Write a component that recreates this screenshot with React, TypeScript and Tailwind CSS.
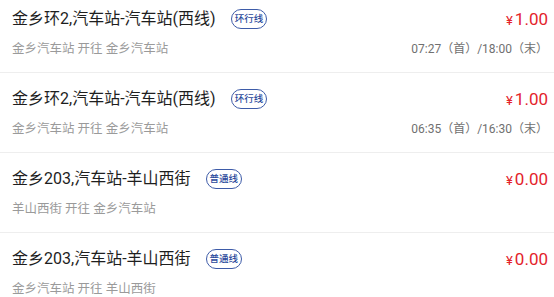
const routes = [
  {
    title: "金乡环2,汽车站-汽车站(西线)",
    tag: "环行线",
    from: "金乡汽车站",
    to: "金乡汽车站",
    price: "1.00",
    time: "07:27（首）/18:00（末）",
  },
  {
    title: "金乡环2,汽车站-汽车站(西线)",
    tag: "环行线",
    from: "金乡汽车站",
    to: "金乡汽车站",
    price: "1.00",
    time: "06:35（首）/16:30（末）",
  },
  {
    title: "金乡203,汽车站-羊山西街",
    tag: "普通线",
    from: "羊山西街",
    to: "金乡汽车站",
    price: "0.00",
    time: "",
  },
  {
    title: "金乡203,汽车站-羊山西街",
    tag: "普通线",
    from: "金乡汽车站",
    to: "羊山西街",
    price: "0.00",
    time: "",
  },
];

function RouteRow({ title, tag, from, to, price, time }: (typeof routes)[number]) {
  return (
    <div className="flex flex-col gap-[9px] pt-[14px] pb-[14px] pl-3 pr-[6px] border-b border-[#eeeeee]">
      <div className="flex items-center h-6">
        <span className="text-[16px] leading-6 text-[#1e1e1e] whitespace-nowrap">{title}</span>
        <span className="ml-[15px] rounded-full border-[1.5px] border-[#3d5ba8] px-[3px] h-[20px] flex items-center text-[9.5px] leading-none font-medium text-[#2b4a9c]">
          {tag}
        </span>
        <span className="ml-auto flex items-baseline text-[#e3232b]">
          <span className="text-[13px] mr-[2px]">¥</span>
          <span className="text-[17px] leading-6">{price}</span>
        </span>
      </div>
      <div className="flex items-center h-[18px] text-[12.5px] leading-[18px]">
        <span className="text-[#9a9a9a]">
          {from} 开往 {to}
        </span>
        <span className="ml-auto text-[12px] text-[#707070]">{time}</span>
      </div>
    </div>
  );
}

export default function App() {
  return (
    <div
      className="w-[554px] h-[297px] overflow-hidden bg-white"
      style={{ fontFamily: 'Roboto, "Noto Sans CJK SC", sans-serif' }}
    >
      <div className="-mt-[7px]">
        {routes.map((r, i) => (
          <RouteRow key={i} {...r} />
        ))}
      </div>
    </div>
  );
}
